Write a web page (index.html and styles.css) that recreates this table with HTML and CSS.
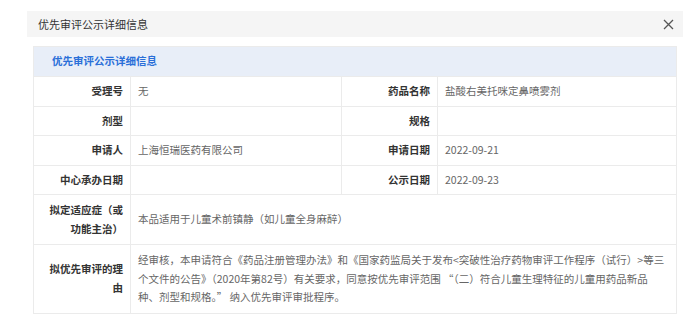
FILE: index.html
```html
<!DOCTYPE html>
<html lang="zh-CN">
  <head>
    <meta charset="UTF-8" />
    <meta name="viewport" content="width=device-width, initial-scale=1.0" />
    <title>优先审评公示详细信息</title>
    <link rel="stylesheet" href="styles.css">
  </head>
  <body>
    <div class="dialog">
      <div class="dialog-header">
        <span class="dialog-title">优先审评公示详细信息</span>
        <span class="dialog-close">
          <svg width="11" height="11" viewBox="0 0 11 11">
            <path d="M1 1 L10 10 M10 1 L1 10" stroke="#555" stroke-width="1.3" fill="none" />
          </svg>
        </span>
      </div>

      <table class="detail-table">
        <colgroup>
          <col class="col-label" />
          <col class="col-value" />
          <col class="col-label2" />
          <col />
        </colgroup>
        <tr class="table-caption">
          <td colspan="4">优先审评公示详细信息</td>
        </tr>
        <tr>
          <td class="label">受理号</td>
          <td>无</td>
          <td class="label">药品名称</td>
          <td>盐酸右美托咪定鼻喷雾剂</td>
        </tr>
        <tr>
          <td class="label">剂型</td>
          <td></td>
          <td class="label">规格</td>
          <td></td>
        </tr>
        <tr>
          <td class="label">申请人</td>
          <td>上海恒瑞医药有限公司</td>
          <td class="label">申请日期</td>
          <td>2022-09-21</td>
        </tr>
        <tr>
          <td class="label">中心承办日期</td>
          <td></td>
          <td class="label">公示日期</td>
          <td>2022-09-23</td>
        </tr>
        <tr class="tall">
          <td class="label">拟定适应症（或功能主治）</td>
          <td colspan="3">本品适用于儿童术前镇静（如儿童全身麻醉）</td>
        </tr>
        <tr class="tall">
          <td class="label">拟优先审评的理由</td>
          <td colspan="3">经审核，本申请符合《药品注册管理办法》和《国家药监局关于发布&lt;突破性治疗药物审评工作程序（试行）&gt;等三个文件的公告》（2020年第82号）有关要求，同意按优先审评范围 “（二）符合儿童生理特征的儿童用药品新品<br>种、剂型和规格。” 纳入优先审评审批程序。</td>
        </tr>
      </table>
    </div>
  </body>
</html>
```

FILE: styles.css
```css
* {
  margin: 0;
  padding: 0;
  box-sizing: border-box;
}

body {
  background: #fff;
  font-family: "Noto Sans CJK SC", "Noto Sans", sans-serif;
  color: #333;
}

.dialog {
  width: 656px;
  margin: 11px 0 0 27px;
}

.dialog-header {
  height: 26px;
  background: #f5f5f5;
  display: flex;
  align-items: center;
  justify-content: space-between;
  padding: 0 9px 0 11px;
}

.dialog-title {
  font-size: 11px;
  color: #333;
}

.dialog-close {
  display: flex;
  align-items: center;
}

.detail-table {
  width: 644px;
  margin: 9px 6px 0 6px;
  border-collapse: collapse;
  table-layout: fixed;
  font-size: 10.5px;
  line-height: 18.5px;
}

.col-label {
  width: 97px;
}

.col-value {
  width: 211px;
}

.col-label2 {
  width: 96px;
}

.detail-table td {
  border: 1px solid #ebebeb;
  padding: 5px 7px;
  height: 29px;
  color: #666;
  vertical-align: middle;
}

.detail-table td.label {
  text-align: right;
  font-weight: bold;
  color: #333;
}

.table-caption td {
  background: #e8eef8;
  color: #2a6fd8;
  font-weight: bold;
  padding-left: 18px;
  height: 30px;
}

.tall td {
  padding-top: 6px;
  padding-bottom: 6px;
}
```
